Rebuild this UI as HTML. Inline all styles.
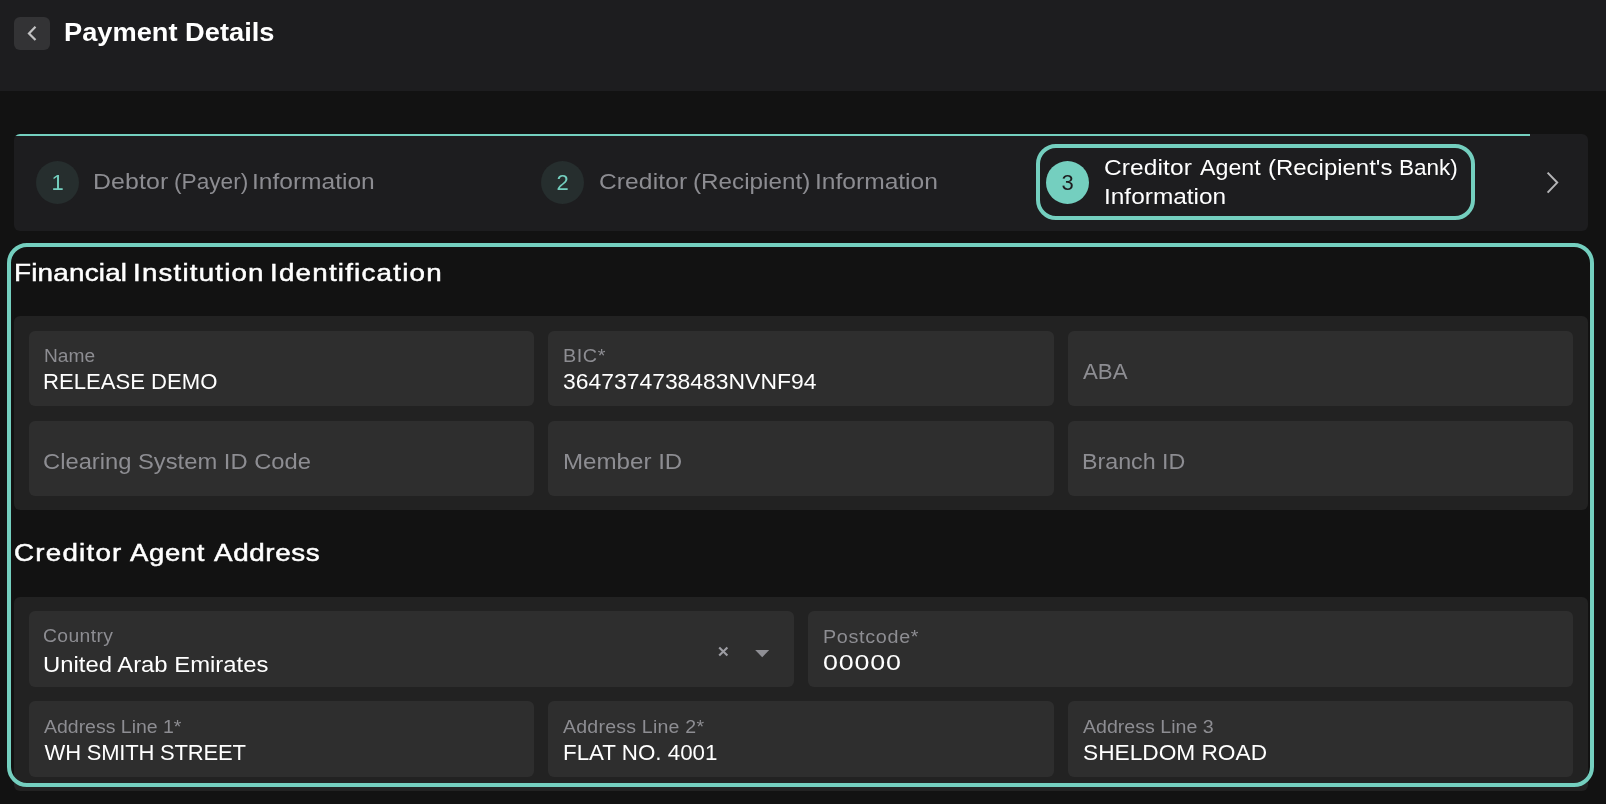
<!DOCTYPE html>
<html lang="en"><head><meta charset="utf-8"><title>Payment Details</title>
<style>
*{box-sizing:border-box;margin:0;padding:0}
h1,h2{font:inherit}
html,body{width:1606px;height:804px;overflow:hidden;background:#121212;font-family:"Liberation Sans",sans-serif}
.abs{position:absolute}
.t{position:absolute;white-space:pre;transform-origin:0 0;font-family:"Liberation Sans",sans-serif}
.hdr{left:0;top:0;width:1606px;height:91px;background:#1d1d1f}
.back{left:14px;top:16.8px;width:36.2px;height:33.1px;border-radius:6px;background:#333335}
.stepper{left:14px;top:134px;width:1574px;height:97px;border-radius:6px;background:#1d1d1f;overflow:hidden}
.prog{left:0;top:0;width:1516px;height:2px;background:#74cfbf}
.circ{will-change:transform;width:43.2px;height:43.2px;border-radius:50%;top:160.9px;background:#262e2e;color:#74cfbf;font-size:22px;line-height:43.2px;text-align:center}
.circ.act{background:#74cfbf;color:#1d1d1f}
.pill{left:1036px;top:144px;width:439px;height:76px;border:4px solid #74cfbf;border-radius:20px}
.group{left:14px;width:1574px;border-radius:6px;background:#222222}
.f{position:absolute;height:75px;border-radius:6px;background:#2e2e2e}
.txt{left:0;top:0;width:1606px;height:804px;will-change:transform}
.card{left:7px;top:243px;width:1587px;height:544px;border:4px solid #74cfbf;border-radius:20px}
</style></head><body>
<div class="abs hdr"></div>
<div class="abs back"><svg width="36" height="33" viewBox="0 0 36 33"><path d="M21.5 9.8 L15.0 16.4 L21.5 23.0" fill="none" stroke="#c2c2c3" stroke-width="2.2"/></svg></div>
<div class="abs stepper"><div class="abs prog"></div></div>
<div class="abs circ" style="left:35.9px">1</div>
<div class="abs circ" style="left:541.2px">2</div>
<div class="abs pill"></div>
<div class="abs circ act" style="left:1046.1px">3</div>
<svg class="abs" style="left:1540px;top:166px" width="26" height="34" viewBox="0 0 26 34"><path d="M7.6 6.6 L17.2 16.6 L7.6 26.6" fill="none" stroke="#b5b5b7" stroke-width="2"/></svg>
<div class="abs group" style="top:316px;height:194px"></div>
<div class="abs group" style="top:597px;height:194px"></div>
<div class="f" style="left:29px;top:331px;width:505.3px;height:75px"></div>
<div class="f" style="left:548.3px;top:331px;width:505.4px;height:75px"></div>
<div class="f" style="left:1067.7px;top:331px;width:505.3px;height:75px"></div>
<div class="f" style="left:29px;top:421px;width:505.3px;height:75px"></div>
<div class="f" style="left:548.3px;top:421px;width:505.4px;height:75px"></div>
<div class="f" style="left:1067.7px;top:421px;width:505.3px;height:75px"></div>
<div class="f" style="left:29px;top:701.3px;width:505.3px;height:75.4px"></div>
<div class="f" style="left:548.3px;top:701.3px;width:505.4px;height:75.4px"></div>
<div class="f" style="left:1067.7px;top:701.3px;width:505.3px;height:75.4px"></div>
<div class="f" style="left:29px;top:611.2px;width:764.6px;height:75.5px"></div>
<div class="f" style="left:808.1px;top:611.2px;width:764.9px;height:75.5px"></div>
<svg class="abs" style="left:716px;top:644px" width="16" height="16" viewBox="0 0 16 16"><path d="M3.2 3.4 L11.4 11.6 M11.4 3.4 L3.2 11.6" fill="none" stroke="#9d9da3" stroke-width="2.1"/></svg>
<svg class="abs" style="left:754px;top:648px" width="18" height="12" viewBox="0 0 18 12"><path d="M1.2 1.9 L15.2 1.9 L8.2 9.3 Z" fill="#8f8f95"/></svg>
<div class="abs txt">
<h1><span class="t" style="left:63.9px;top:19.0px;font-size:26px;line-height:26px;letter-spacing:-0.0px;color:#ffffff;transform:scaleX(1.0475);font-weight:700;">Payment Details</span></h1>
<nav>
<span class="t" style="left:92.8px;top:171.0px;font-size:22px;line-height:22px;letter-spacing:0.11px;color:#8c8c91;transform:scaleX(1.1297);">Debtor </span>
<span class="t" style="left:173.5px;top:171.0px;font-size:22px;line-height:22px;letter-spacing:-0.0px;color:#8c8c91;transform:scaleX(1.03);">(Payer) </span>
<span class="t" style="left:251.9px;top:171.0px;font-size:22px;line-height:22px;letter-spacing:0.0px;color:#8c8c91;transform:scaleX(1.115);">Information</span>
<span class="t" style="left:598.5px;top:171.0px;font-size:22px;line-height:22px;letter-spacing:0.1px;color:#8c8c91;transform:scaleX(1.1154);">Creditor </span>
<span class="t" style="left:693.3px;top:171.0px;font-size:22px;line-height:22px;letter-spacing:-0.0px;color:#8c8c91;transform:scaleX(1.1019);">(Recipient) </span>
<span class="t" style="left:814.5px;top:171.0px;font-size:22px;line-height:22px;letter-spacing:0.0px;color:#8c8c91;transform:scaleX(1.1168);">Information</span>
<span class="t" style="left:1103.9px;top:157.0px;font-size:22px;line-height:22px;letter-spacing:0.08px;color:#ffffff;transform:scaleX(1.1141);">Creditor </span>
<span class="t" style="left:1199.8px;top:157.0px;font-size:22px;line-height:22px;letter-spacing:0.0px;color:#ffffff;transform:scaleX(1.0552);">Agent </span>
<span class="t" style="left:1268.2px;top:157.0px;font-size:22px;line-height:22px;letter-spacing:0.0px;color:#ffffff;transform:scaleX(1.0885);">(Recipient&#39;s </span>
<span class="t" style="left:1398.5px;top:157.0px;font-size:22px;line-height:22px;letter-spacing:0.0px;color:#ffffff;transform:scaleX(1.0241);">Bank) </span>
<span class="t" style="left:1103.6px;top:186.0px;font-size:22px;line-height:22px;letter-spacing:0.0px;color:#ffffff;transform:scaleX(1.1103);">Information</span>
</nav>
<section>
<h2><span class="t" style="left:14.0px;top:261.0px;font-size:24.8px;line-height:24.8px;letter-spacing:0.17px;color:#ffffff;transform:scaleX(1.1237);-webkit-text-stroke:0.5px #ffffff;">Financial </span>
<span class="t" style="left:132.6px;top:261.0px;font-size:24.8px;line-height:24.8px;letter-spacing:1.07px;color:#ffffff;transform:scaleX(1.1167);-webkit-text-stroke:0.5px #ffffff;">Institution </span>
<span class="t" style="left:269.9px;top:261.0px;font-size:24.8px;line-height:24.8px;letter-spacing:1.08px;color:#ffffff;transform:scaleX(1.12);-webkit-text-stroke:0.5px #ffffff;">Identification</span></h2>
<span class="t" style="left:43.7px;top:348.0px;font-size:17.5px;line-height:17.5px;letter-spacing:-0.0px;color:#8d8d92;transform:scaleX(1.0933);">Name</span>
<span class="t" style="left:43.0px;top:371.0px;font-size:22px;line-height:22px;letter-spacing:0.0px;color:#ffffff;transform:scaleX(1.0047);">RELEASE DEMO</span>
<span class="t" style="left:563.3px;top:348.0px;font-size:17.5px;line-height:17.5px;letter-spacing:0.48px;color:#8d8d92;transform:scaleX(1.1333);">BIC*</span>
<span class="t" style="left:563.0px;top:371.0px;font-size:22px;line-height:22px;letter-spacing:0.0px;color:#ffffff;transform:scaleX(1.0409);">3647374738483NVNF94</span>
<span class="t" style="left:1083.1px;top:361.0px;font-size:22px;line-height:22px;letter-spacing:-0.0px;color:#8d8d92;transform:scaleX(1.0114);">ABA</span>
<span class="t" style="left:43.0px;top:451.0px;font-size:22px;line-height:22px;letter-spacing:-0.0px;color:#8d8d92;transform:scaleX(1.0793);">Clearing System ID Code</span>
<span class="t" style="left:562.8px;top:451.0px;font-size:22px;line-height:22px;letter-spacing:-0.0px;color:#8d8d92;transform:scaleX(1.0962);">Member ID</span>
<span class="t" style="left:1082.1px;top:451.0px;font-size:22px;line-height:22px;letter-spacing:0.0px;color:#8d8d92;transform:scaleX(1.0563);">Branch ID</span>
</section>
<section>
<h2><span class="t" style="left:14.4px;top:541.0px;font-size:24.8px;line-height:24.8px;letter-spacing:1.12px;color:#ffffff;transform:scaleX(1.1179);-webkit-text-stroke:0.5px #ffffff;">Creditor </span>
<span class="t" style="left:130.3px;top:541.0px;font-size:24.8px;line-height:24.8px;letter-spacing:0.58px;color:#ffffff;transform:scaleX(1.1088);-webkit-text-stroke:0.5px #ffffff;">Agent </span>
<span class="t" style="left:214.3px;top:541.0px;font-size:24.8px;line-height:24.8px;letter-spacing:0.53px;color:#ffffff;transform:scaleX(1.1223);-webkit-text-stroke:0.5px #ffffff;">Address</span></h2>
<span class="t" style="left:43.1px;top:628.0px;font-size:17.5px;line-height:17.5px;letter-spacing:0.35px;color:#8d8d92;transform:scaleX(1.104);">Country</span>
<span class="t" style="left:42.8px;top:654.0px;font-size:22px;line-height:22px;letter-spacing:0.0px;color:#ffffff;transform:scaleX(1.0839);">United Arab Emirates</span>
<span class="t" style="left:823.3px;top:629.0px;font-size:17.5px;line-height:17.5px;letter-spacing:0.59px;color:#8d8d92;transform:scaleX(1.1301);">Postcode*</span>
<span class="t" style="left:822.7px;top:652.0px;font-size:22px;line-height:22px;letter-spacing:0.66px;color:#ffffff;transform:scaleX(1.22);">00000</span>
<span class="t" style="left:43.7px;top:719.0px;font-size:17.5px;line-height:17.5px;letter-spacing:0.0px;color:#8d8d92;transform:scaleX(1.1122);">Address Line 1*</span>
<span class="t" style="left:44.6px;top:742.0px;font-size:22px;line-height:22px;letter-spacing:-0.2px;color:#ffffff;">WH SMITH STREET</span>
<span class="t" style="left:563.3px;top:719.0px;font-size:17.5px;line-height:17.5px;letter-spacing:0.19px;color:#8d8d92;transform:scaleX(1.1175);">Address Line 2*</span>
<span class="t" style="left:563.1px;top:742.0px;font-size:22px;line-height:22px;letter-spacing:0.0px;color:#ffffff;transform:scaleX(1.0161);">FLAT NO. 4001</span>
<span class="t" style="left:1083.0px;top:719.0px;font-size:17.5px;line-height:17.5px;letter-spacing:0.0px;color:#8d8d92;transform:scaleX(1.119);">Address Line 3</span>
<span class="t" style="left:1082.5px;top:742.0px;font-size:22px;line-height:22px;letter-spacing:0.0px;color:#ffffff;transform:scaleX(1.0311);">SHELDOM ROAD</span>
</section>
</div>
<div class="abs card"></div>
</body></html>
